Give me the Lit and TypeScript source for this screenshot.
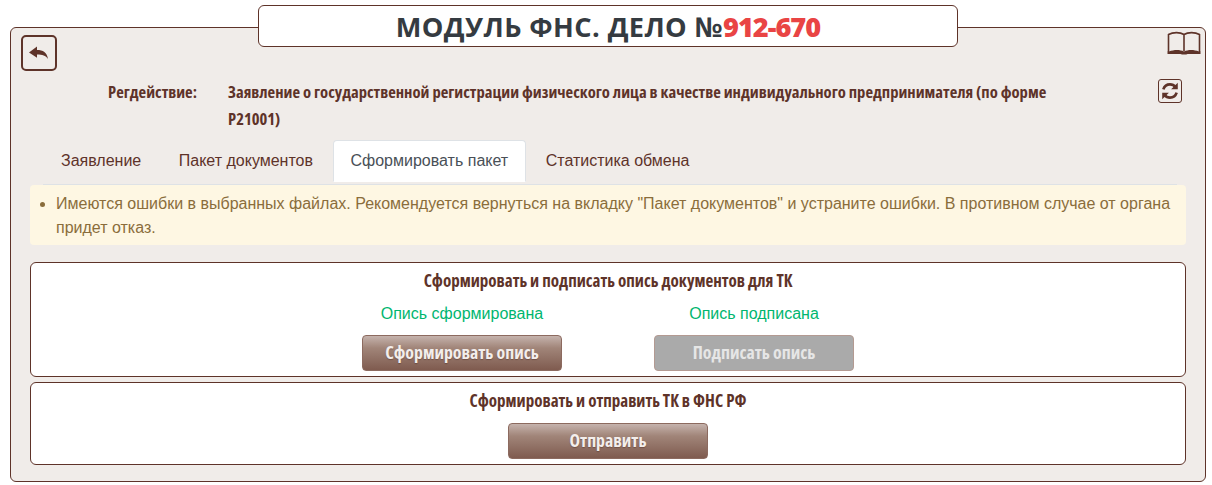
import { LitElement, html, css } from 'lit';
import { customElement } from 'lit/decorators.js';

const tabs = ['Заявление', 'Пакет документов', 'Сформировать пакет', 'Статистика обмена'];

@customElement('app-root')
export class AppRoot extends LitElement {
  static styles = css`
    :host {
      display: block;
      width: 1212px;
      height: 485px;
      overflow: hidden;
      background: #fff;
      font-family: 'Liberation Sans', Arial, sans-serif;
      color: #5e3329;
      box-sizing: border-box;
    }
    * {
      box-sizing: border-box;
    }
    .title {
      position: relative;
      z-index: 1;
      width: 700px;
      height: 42px;
      margin: 5px 0 -20px 258px;
      background: #fff;
      border: 1px solid #5e3329;
      border-radius: 6px;
      display: flex;
      align-items: center;
      justify-content: center;
      font-family: 'Open Sans', sans-serif;
      font-weight: 700;
      font-size: 27.2px;
      letter-spacing: 0.4px;
      color: #353b41;
    }
    .title b {
      color: #e94444;
      letter-spacing: -1px;
    }
    .panel {
      position: relative;
      width: 1196px;
      height: 455px;
      margin-left: 10px;
      padding: 7px 19px 0 10px;
      background: #f0ece9;
      border: 1px solid #5e3329;
      border-radius: 6px;
    }
    .back {
      width: 36px;
      height: 36px;
      border: 2px solid #5e3329;
      border-radius: 5px;
      display: flex;
      align-items: center;
      justify-content: center;
    }
    .book {
      position: absolute;
      top: 3px;
      right: 4px;
    }
    .reg {
      display: flex;
      margin-top: 7px;
      font-family: 'Open Sans', sans-serif;
      font-stretch: 75%;
      font-weight: 700;
      font-size: 16.6px;
      line-height: 27px;
    }
    .reg-label {
      width: 120px;
      margin-left: 87px;
      flex: none;
    }
    .reg-value {
      width: 840px;
      flex: none;
    }
    .refresh {
      width: 24px;
      height: 24px;
      margin: 1px 0 0 90px;
      border: 1px solid #5e3329;
      border-radius: 3px;
      display: flex;
      align-items: center;
      justify-content: center;
    }
    .tabs {
      display: flex;
      gap: 1.5px;
      margin: 8px 0 0 22px;
      width: 1134px;
      border-bottom: 1px solid #dee2e6;
      height: 45px;
    }
    .tab {
      height: 42px;
      padding: 0 17px;
      display: flex;
      align-items: center;
      font-size: 16px;
      color: #5e3329;
      border: 1px solid transparent;
    }
    .tab.active {
      background: #fff;
      color: #495057;
      border-color: #dee2e6 #dee2e6 #fff;
      border-radius: 4px 4px 0 0;
    }
    .alert {
      margin-left: 9px;
      width: 1156px;
      height: 60px;
      padding: 7px 12px 0 26px;
      background: #fef7e3;
      border-radius: 4px;
      color: #8a6d3b;
      font-size: 16px;
      line-height: 24px;
    }
    .alert ul {
      margin: 0;
      padding: 0;
    }
    .box {
      margin-left: 9px;
      width: 1156px;
      background: #fff;
      border: 1px solid #5e3329;
      border-radius: 6px;
      display: flex;
      flex-direction: column;
      align-items: center;
    }
    .box.sign {
      height: 115px;
      margin-top: 17px;
    }
    .box.send {
      height: 83px;
      margin-top: 5px;
    }
    h3 {
      margin: 0;
      font-family: 'Open Sans', sans-serif;
      font-stretch: 75%;
      font-weight: 700;
      font-size: 17px;
      line-height: 35px;
      height: 36px;
    }
    .cols {
      display: flex;
      gap: 92px;
    }
    .col {
      display: flex;
      flex-direction: column;
      align-items: center;
    }
    .ok {
      color: #00b66f;
      font-size: 16px;
      line-height: 30px;
      height: 36px;
    }
    .btn {
      width: 200px;
      height: 36px;
      padding-bottom: 3px;
      border: 1px solid #8c6a5f;
      border-radius: 4px;
      background: linear-gradient(#c5b3ad, #a18579 35%, #7f5b4f);
      color: #f3eeec;
      font-family: 'Open Sans', sans-serif;
      font-stretch: 75%;
      font-weight: 700;
      font-size: 17.8px;
      text-shadow: 0 1px 1px rgba(60, 30, 20, 0.35);
      display: flex;
      align-items: center;
      justify-content: center;
    }
    .btn.off {
      background: #aaa;
      border-color: #b39a92;
      color: #e6e6e6;
      text-shadow: none;
    }
    .btn.send-btn {
      margin-top: 4px;
    }
  `;

  render() {
    return html`
      <div class="title"><span>МОДУЛЬ ФНС. ДЕЛО №<b>912-670</b></span></div>
      <div class="panel">
        <div class="back">
          <svg width="20" height="14" viewBox="0 0 20 14">
            <path fill="#5e3329" d="M0 6.500 8 .5v3.400c6 0 10 2.300 11 9.100-2.300-3.800-5.600-4.600-11-4.600v3.300z" />
          </svg>
        </div>
        <svg class="book" width="34" height="24" viewBox="0 0 34 24">
          <path fill="none" stroke="#5e3329" stroke-width="1.600"
            d="M1.500 21V3.500C6 1 13 1 17 3.500 21 1 28 1 32.500 3.500V21M17 3.500V20" />
          <path fill="#5e3329" d="M.5 20.500h1.500C7 18.500 13 18.500 17 20.500c4-2 10-2 15 0h1.500V23H20.500c-1 .8-5.500 .8-7 0H.5z" />
        </svg>
        <div class="reg">
          <div class="reg-label">Регдействие:</div>
          <div class="reg-value">Заявление о государственной регистрации физического лица в качестве индивидуального предпринимателя (по форме Р21001)</div>
          <div class="refresh">
            <svg width="20" height="20" viewBox="0 0 18 18">
              <path fill="none" stroke="#5e3329" stroke-width="2.400" d="M3 7.500C4 4.500 6.300 3 9 3c2.200 0 3.800 1 5 2.500M15 10.500C14 13.500 11.700 15 9 15c-2.200 0-3.800-1-5-2.500" />
              <path fill="#5e3329" d="M16 1.500v6h-6zM2 16.500v-6h6z" />
            </svg>
          </div>
        </div>
        <div class="tabs">
          ${tabs.map((t, i) => html`<div class="tab ${i === 2 ? 'active' : ''}">${t}</div>`)}
        </div>
        <div class="alert">
          <ul>
            <li>Имеются ошибки в выбранных файлах. Рекомендуется вернуться на вкладку "Пакет документов" и устраните ошибки. В противном случае от органа придет отказ.</li>
          </ul>
        </div>
        <div class="box sign">
          <h3>Сформировать и подписать опись документов для ТК</h3>
          <div class="cols">
            <div class="col">
              <div class="ok">Опись сформирована</div>
              <div class="btn">Сформировать опись</div>
            </div>
            <div class="col">
              <div class="ok">Опись подписана</div>
              <div class="btn off">Подписать опись</div>
            </div>
          </div>
        </div>
        <div class="box send">
          <h3>Сформировать и отправить ТК в ФНС РФ</h3>
          <div class="btn send-btn">Отправить</div>
        </div>
      </div>
    `;
  }
}
